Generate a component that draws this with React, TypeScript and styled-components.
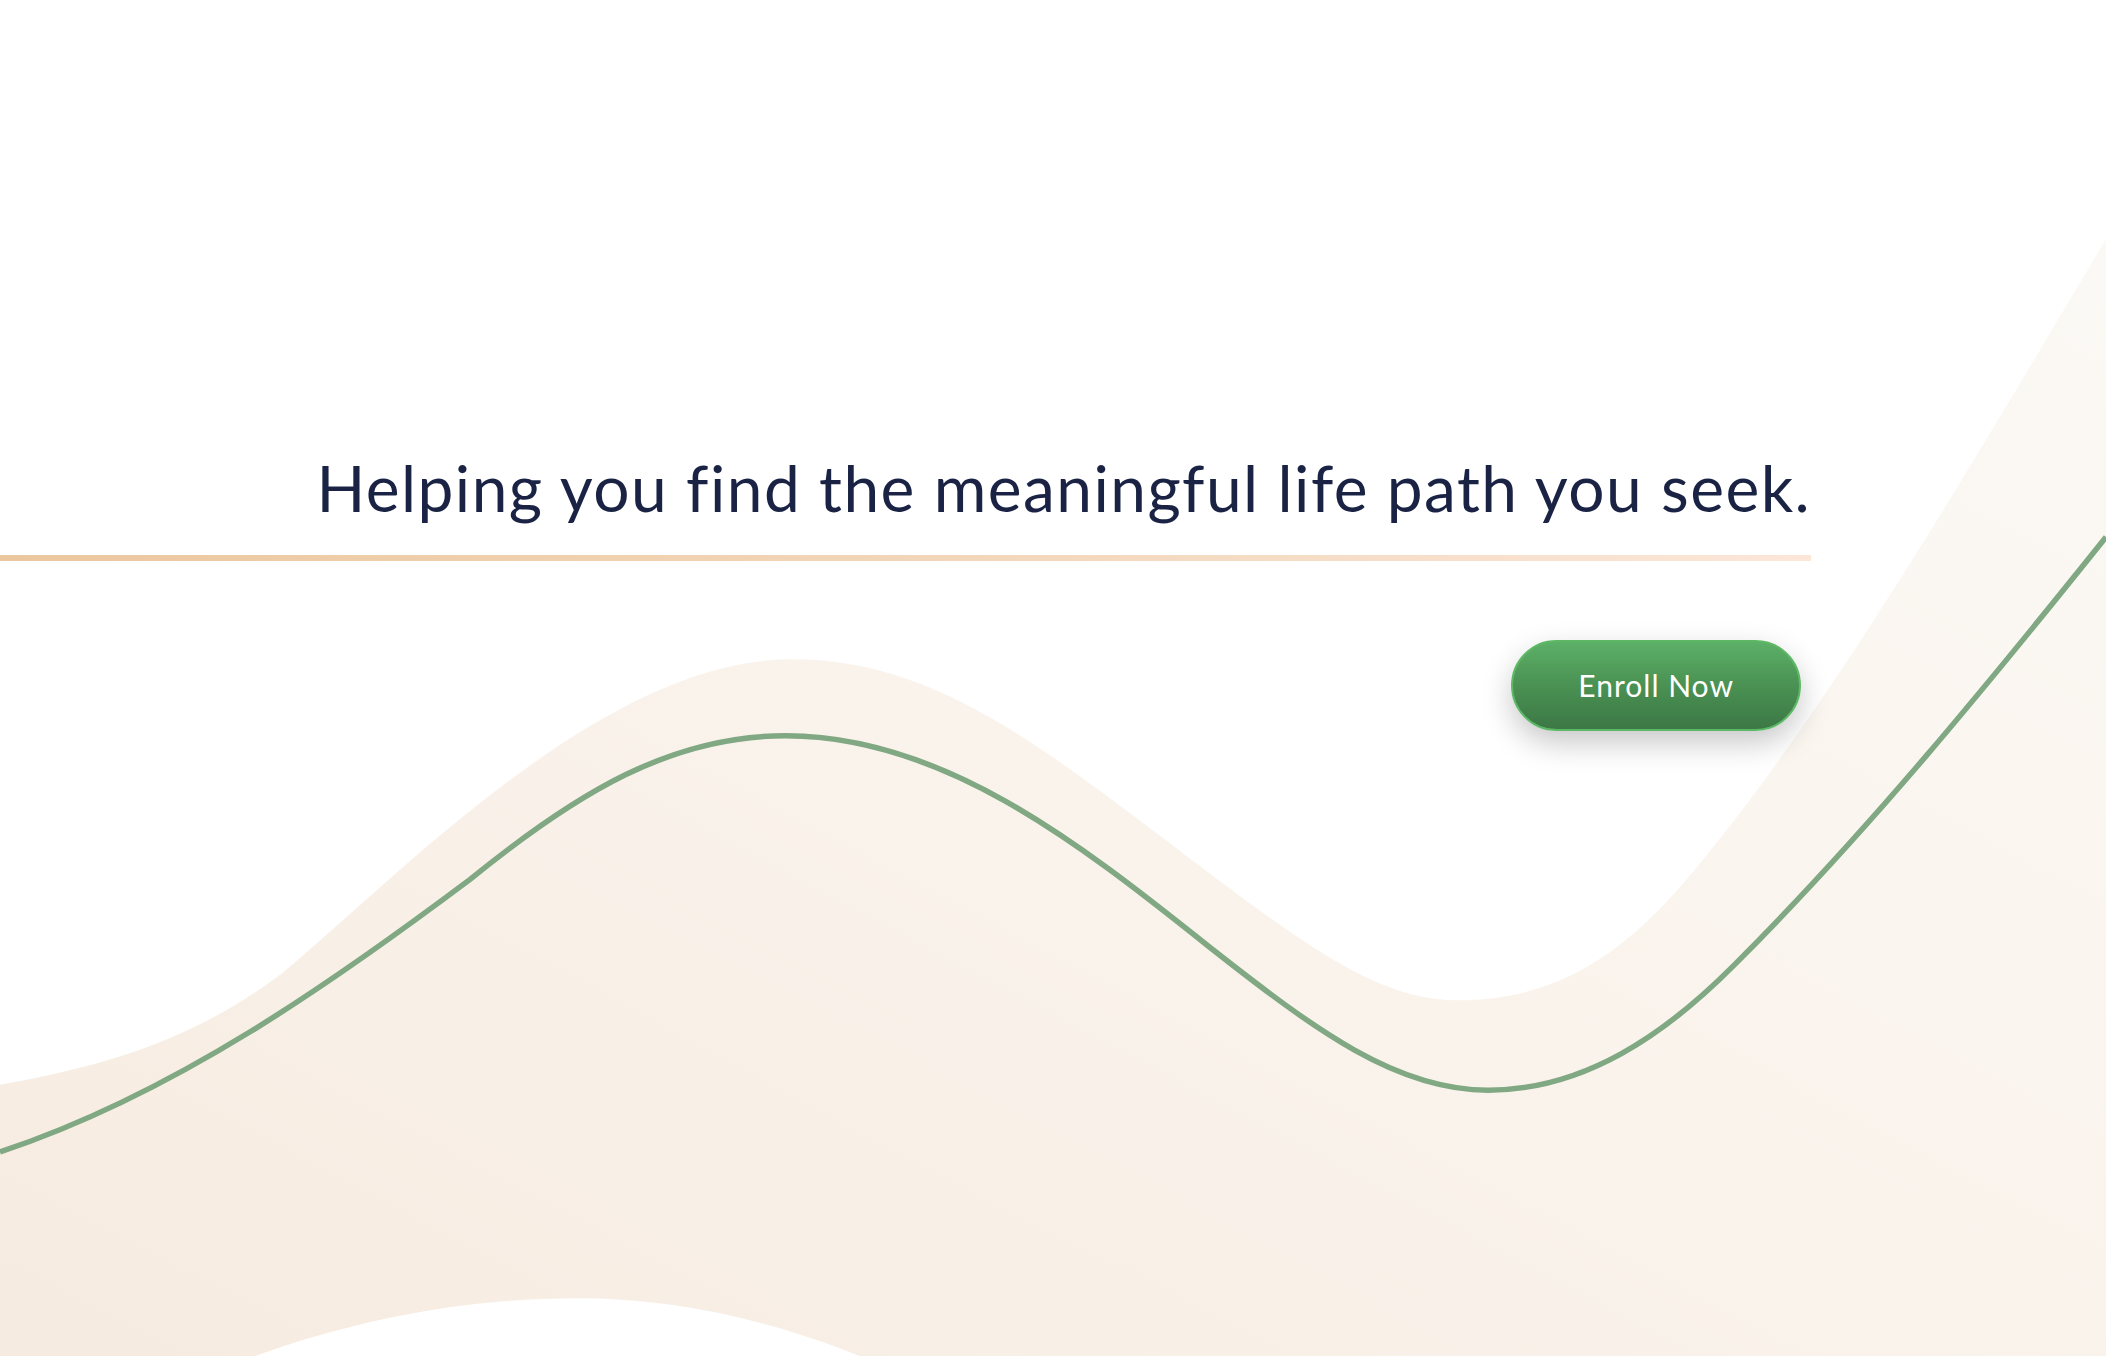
import React from "react";
import styled, { createGlobalStyle } from "styled-components";

const GlobalStyle = createGlobalStyle`
  html, body {
    margin: 0;
    padding: 0;
    background: #ffffff;
  }
  body {
    font-family: Lato, "Noto Sans", sans-serif;
  }
  * { box-sizing: border-box; }
`;

const Page = styled.main`
  position: relative;
  width: 100%;
  min-height: 100vh;
  overflow: hidden;
  background: #ffffff;
`;

const Backdrop = styled.svg`
  position: absolute;
  inset: 0;
  width: 100%;
  height: 100%;
  display: block;
  z-index: 0;
`;

const Hero = styled.section`
  position: relative;
  z-index: 1;
  width: 86%;
  padding-top: 450px;
  display: flex;
  flex-direction: column;
  align-items: flex-end;
`;

const Heading = styled.h1`
  margin: 0;
  font-family: Lato, "Noto Sans", sans-serif;
  font-weight: 400;
  font-size: 64px;
  line-height: 1.2;
  color: #1a2344;
  letter-spacing: 1.45px;
  text-align: right;
`;

const Rule = styled.div`
  align-self: stretch;
  height: 6px;
  margin-top: 28px;
  background: linear-gradient(90deg, #ebc79e 0%, #f3d7bb 55%, #fbe6d8 100%);
`;

const EnrollButton = styled.button`
  margin-top: 79px;
  margin-right: 10px;
  width: 290px;
  height: 91px;
  border-radius: 46px;
  border: 2px solid #5db865;
  background: linear-gradient(180deg, #5cb067 0%, #4a9153 50%, #3c7845 100%);
  box-shadow: 0 12px 30px rgba(0, 0, 0, 0.22);
  color: #ffffff;
  font-family: Lato, "Noto Sans", sans-serif;
  font-size: 30px;
  font-weight: 400;
  letter-spacing: 1px;
  cursor: pointer;
`;

export default function App() {
  return (
    <>
      <GlobalStyle />
      <Page>
        <Backdrop viewBox="0 0 1568 1010" preserveAspectRatio="none" aria-hidden="true">
          <defs>
            <linearGradient id="cream" x1="0" y1="1" x2="1" y2="0">
              <stop offset="0%" stopColor="#f6ebe0" />
              <stop offset="50%" stopColor="#faf3ec" />
              <stop offset="100%" stopColor="#fbf9f5" />
            </linearGradient>
          </defs>
          <path
            fill="url(#cream)"
            d="M0,808 C90,792 150,770 210,725 C300,650 450,491 590,491 C700,491 780,560 900,650 C980,710 1030,745 1085,745 C1160,745 1210,710 1260,650 C1360,530 1460,360 1568,178 L1568,1010 L640,1010 C560,978 490,967 430,967 C340,967 260,985 190,1010 L0,1010 Z"
          />
          <path
            fill="none"
            stroke="#80a883"
            strokeWidth="5.5"
            vectorEffect="non-scaling-stroke"
            d="M0,858 C130,815 250,730 350,655 C430,590 500,548 585,548 C700,548 800,625 900,705 C980,768 1040,812 1108,812 C1180,812 1240,770 1290,720 C1390,620 1480,510 1568,400"
          />
        </Backdrop>
        <Hero>
          <Heading>Helping you find the meaningful life path you seek.</Heading>
          <Rule />
          <EnrollButton type="button">Enroll Now</EnrollButton>
        </Hero>
      </Page>
    </>
  );
}
